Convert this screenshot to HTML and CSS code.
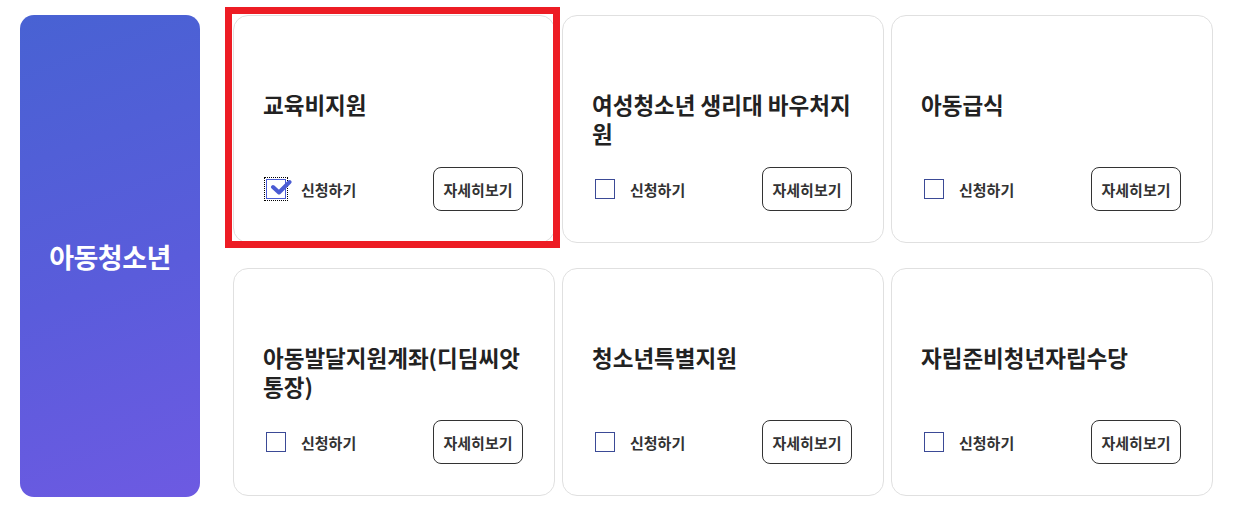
FILE: index.html
```html
<!doctype html>
<html>
  <head>
    <meta charset="utf-8">
    <title>아동청소년 지원</title>
    <link rel="stylesheet" href="styles.css">
  </head>
  <body>
    <div class="wrap">
      <div class="side">아동청소년</div>
      <div class="cards">
        <div class="card on">
          <div class="mark"></div>
          <h3 class="tit">교육비지원</h3>
          <div class="row">
            <label class="chk checked">
              <span class="box">
                <svg width="22" height="16" viewBox="0 0 22 16"><path d="M3 8 L9 13.5 L19.5 3" fill="none" stroke="#4a5bd3" stroke-width="4" stroke-linecap="round" stroke-linejoin="round"/></svg>
              </span>
              <span class="txt">신청하기</span>
            </label>
            <button class="more">자세히보기</button>
          </div>
        </div>
        <div class="card">
          <h3 class="tit">여성청소년 생리대 바우처지원</h3>
          <div class="row">
            <label class="chk"><span class="box"></span><span class="txt">신청하기</span></label>
            <button class="more">자세히보기</button>
          </div>
        </div>
        <div class="card">
          <h3 class="tit">아동급식</h3>
          <div class="row">
            <label class="chk"><span class="box"></span><span class="txt">신청하기</span></label>
            <button class="more">자세히보기</button>
          </div>
        </div>
        <div class="card">
          <h3 class="tit">아동발달지원계좌(디딤씨앗통장)</h3>
          <div class="row">
            <label class="chk"><span class="box"></span><span class="txt">신청하기</span></label>
            <button class="more">자세히보기</button>
          </div>
        </div>
        <div class="card">
          <h3 class="tit">청소년특별지원</h3>
          <div class="row">
            <label class="chk"><span class="box"></span><span class="txt">신청하기</span></label>
            <button class="more">자세히보기</button>
          </div>
        </div>
        <div class="card">
          <h3 class="tit">자립준비청년자립수당</h3>
          <div class="row">
            <label class="chk"><span class="box"></span><span class="txt">신청하기</span></label>
            <button class="more">자세히보기</button>
          </div>
        </div>
      </div>
    </div>
  </body>
</html>
```
FILE: styles.css
```css
body{
  margin:0;
  background:#fff;
  font-family:"Noto Sans CJK KR","Noto Sans",sans-serif;
  color:#222;
}
.wrap{
  display:flex;
  gap:33px;
  padding:15px 22px 10px 20px;
}
.side{
  width:180px; height:482px;
  border-radius:14px;
  background:linear-gradient(160deg,#4862d3 0%,#5a5cdb 55%,#6d5ae2 100%);
  color:#fff;
  font-size:27px; font-weight:700;
  display:flex; align-items:center; justify-content:center;
  letter-spacing:-0.5px;
}
.cards{
  display:grid;
  grid-template-columns:repeat(3,322px);
  grid-auto-rows:228px;
  column-gap:7px; row-gap:25px;
}
.card{
  position:relative;
  box-sizing:border-box;
  border:1px solid #e0e0e0;
  border-radius:15px;
  background:#fff;
  padding:0 31px 31px 29px;
  display:flex; flex-direction:column;
}
.card .mark{
  position:absolute; top:-9px; left:-9px;
  width:335px; height:241px;
  box-sizing:border-box;
  border:7px solid #ed1c24;
}
.tit{
  margin:74px -5px 0 0;
  font-size:22.5px; font-weight:700;
  line-height:29px;
  color:#222;
}
.row{
  margin-top:auto;
  display:flex; align-items:center; justify-content:space-between;
}
.chk{
  display:flex; align-items:center;
  margin-left:3px;
}
.chk .box{
  position:relative;
  width:18px; height:18px;
  border:1px solid #3b4a96;
  background:#fff;
}
.chk.checked .box{
  border-color:#4a5bd3;
  outline:1px dotted #000;
  outline-offset:1px;
}
.chk .box svg{
  position:absolute; left:3px; top:-1px;
}
.chk .txt{
  margin-left:15px;
  font-size:15px; font-weight:700;
  color:#333;
}
.more{
  width:90px; height:44px;
  border:1px solid #333;
  border-radius:8px;
  background:#fff;
  font-family:"Noto Sans CJK KR","Noto Sans",sans-serif;
  font-size:15px; font-weight:700;
  color:#333;
  padding:0;
}
```
